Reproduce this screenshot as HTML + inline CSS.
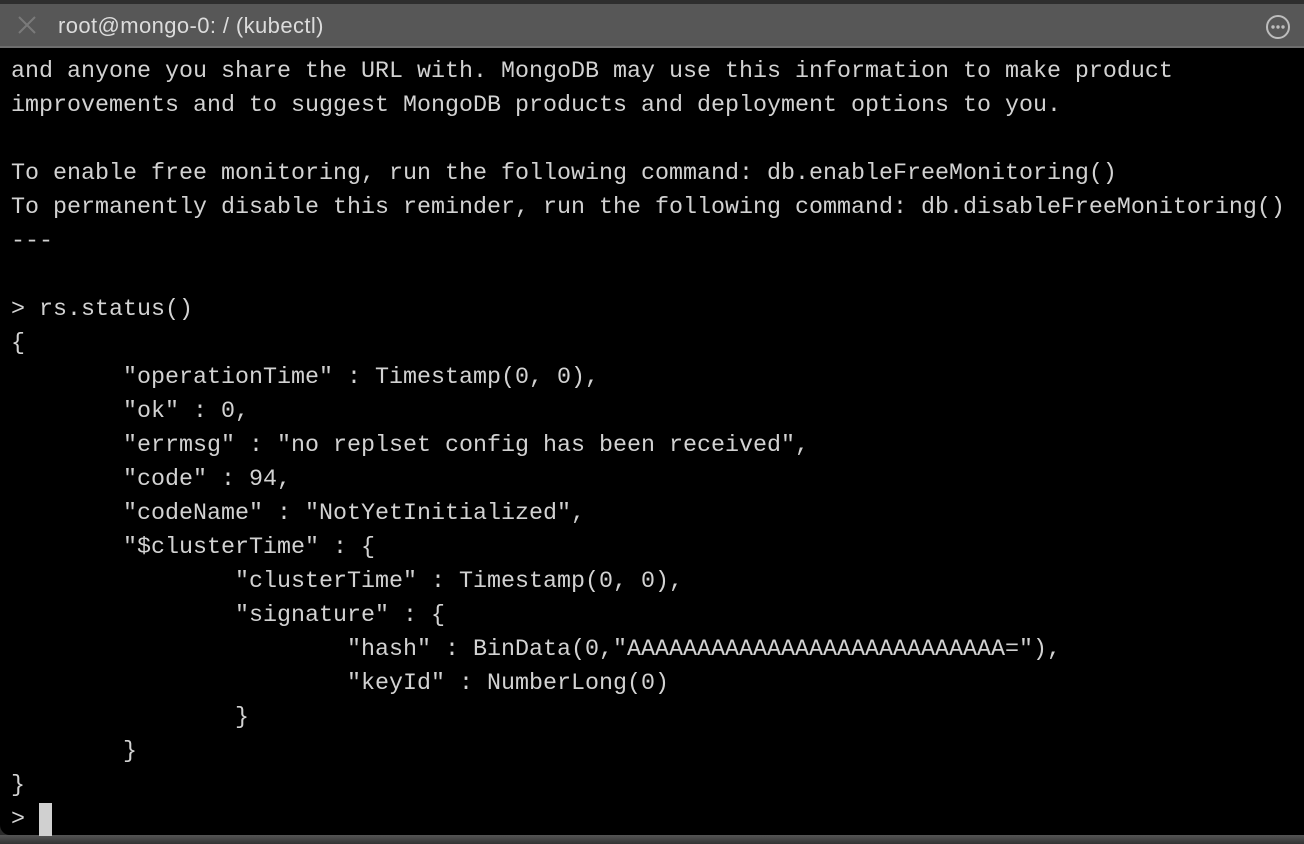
<!DOCTYPE html>
<html><head><style>
html,body{margin:0;padding:0;width:1304px;height:844px;overflow:hidden;background:#2a2a2a;}
.top{position:absolute;left:0;top:0;width:1304px;height:4px;background:#2e2e2e;}
.title{position:absolute;left:0;top:4px;width:1304px;height:42px;background:#575757;border-bottom:2px solid #6e6e6e;}
.title .t{position:absolute;left:58px;top:9px;font:22px "Liberation Sans",sans-serif;letter-spacing:0.4px;color:#dcdcdc;}
.term{position:absolute;left:0;top:48px;width:1304px;height:787px;background:#000;border-radius:0 0 0 10px;}
.bot{position:absolute;left:0;top:835px;width:1304px;height:9px;background:linear-gradient(#555,#333);}
pre{position:absolute;left:11px;top:55px;margin:0;font:23.33px/34px "Liberation Mono",monospace;color:#d2d2d2;}
.cur{display:inline-block;width:13px;height:33px;background:#d0d0d0;vertical-align:top;}
</style></head><body>
<div class="top"></div>
<div class="title">
<svg style="position:absolute;left:17px;top:11px" width="20" height="20"><path d="M2 2L18 18M18 2L2 18" stroke="#7a7a7a" stroke-width="2"/></svg>
<div class="t">root@mongo-0: / (kubectl)</div>
<svg style="position:absolute;left:1265px;top:10px" width="26" height="26"><circle cx="13" cy="13" r="11" fill="none" stroke="#bdbdbd" stroke-width="2"/><circle cx="8" cy="13" r="1.7" fill="#bdbdbd"/><circle cx="13" cy="13" r="1.7" fill="#bdbdbd"/><circle cx="18" cy="13" r="1.7" fill="#bdbdbd"/></svg>
</div>
<div class="term"></div>
<div class="bot"></div>
<pre>and anyone you share the URL with. MongoDB may use this information to make product
improvements and to suggest MongoDB products and deployment options to you.

To enable free monitoring, run the following command: db.enableFreeMonitoring()
To permanently disable this reminder, run the following command: db.disableFreeMonitoring()
---

&gt; rs.status()
{
        "operationTime" : Timestamp(0, 0),
        "ok" : 0,
        "errmsg" : "no replset config has been received",
        "code" : 94,
        "codeName" : "NotYetInitialized",
        "$clusterTime" : {
                "clusterTime" : Timestamp(0, 0),
                "signature" : {
                        "hash" : BinData(0,"AAAAAAAAAAAAAAAAAAAAAAAAAAA="),
                        "keyId" : NumberLong(0)
                }
        }
}
&gt; <span class="cur"></span></pre>
</body></html>
